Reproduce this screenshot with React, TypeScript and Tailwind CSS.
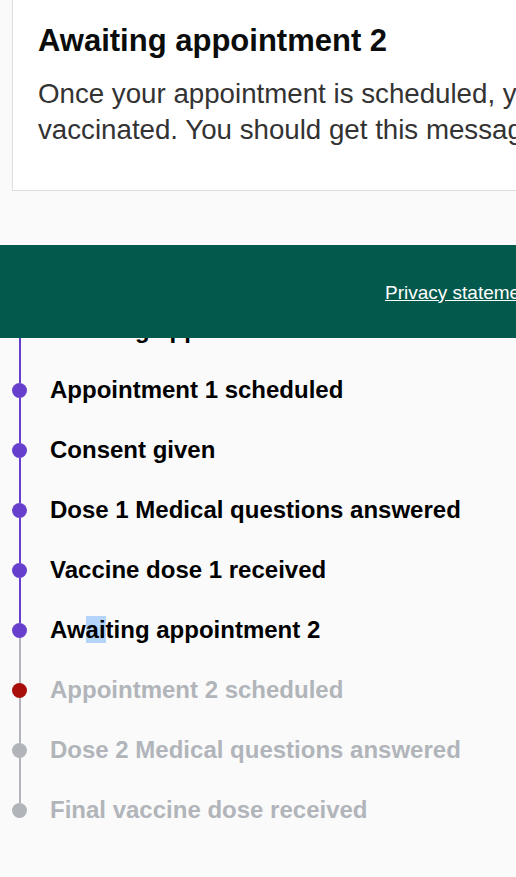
import React from 'react';

type Step = {
  label: string;
  state: 'done' | 'current' | 'blocked' | 'todo';
};

const steps: Step[] = [
  { label: 'Awaiting appointment 1', state: 'done' },
  { label: 'Appointment 1 scheduled', state: 'done' },
  { label: 'Consent given', state: 'done' },
  { label: 'Dose 1 Medical questions answered', state: 'done' },
  { label: 'Vaccine dose 1 received', state: 'done' },
  { label: 'Awaiting appointment 2', state: 'current' },
  { label: 'Appointment 2 scheduled', state: 'blocked' },
  { label: 'Dose 2 Medical questions answered', state: 'todo' },
  { label: 'Final vaccine dose received', state: 'todo' },
];

const PURPLE = 'bg-[#6640cc]';
const GREY = 'bg-[#b1b5ba]';

const dotColour = (s: Step['state']) => {
  if (s === 'blocked') return 'bg-[#a80f0a]';
  if (s === 'todo') return GREY;
  return PURPLE;
};

const StepLabel: React.FC<{ step: Step }> = ({ step }) => {
  const muted = step.state === 'blocked' || step.state === 'todo';
  if (step.state === 'current') {
    // a bit of the label is selected in the screenshot
    return (
      <span className="text-[24px] font-bold text-black whitespace-nowrap">
        Aw<span className="bg-[#b4d4fb]">ai</span>ting appointment 2
      </span>
    );
  }
  return (
    <span className={`text-[24px] font-bold whitespace-nowrap ${muted ? 'text-[#b1b5ba]' : 'text-black'}`}>
      {step.label}
    </span>
  );
};

export default function App() {
  const current = steps.findIndex((s) => s.state === 'current');

  return (
    <div
      className="relative w-[516px] min-h-[877px] overflow-hidden bg-[#fafafa]"
      style={{ fontFamily: '"Liberation Sans", Arial, sans-serif' }}
    >
      <div className="ml-[12px] w-[800px] bg-white border border-t-0 border-[#dedede] pl-[25px] pt-[21px] pb-[42px]">
        <h2 className="text-[31px] leading-[39px] font-bold text-[#0b0c0c] whitespace-nowrap">
          Awaiting appointment 2
        </h2>
        <p className="mt-[16px] text-[27.7px] leading-[36px] text-[#333333] whitespace-nowrap">
          Once your appointment is scheduled, you will receive a message telling you where to get
          <br />
          vaccinated. You should get this message within a few days.
        </p>
      </div>

      <ul className="mt-[109px]">
        {steps.map((step, i) => {
          const topCol = i <= current ? PURPLE : GREY;
          const bottomCol = i < current ? PURPLE : GREY;
          const last = i === steps.length - 1;
          return (
            <li key={step.label} className="flex items-center h-[60px]">
              <div className="ml-[12px] w-[15px] h-full flex flex-col items-center">
                <div className={`flex-1 w-[2px] ${topCol}`} />
                <div className={`w-[15px] h-[15px] rounded-full shrink-0 ${dotColour(step.state)}`} />
                <div className={`flex-1 w-[2px] ${last ? '' : bottomCol}`} />
              </div>
              <div className="ml-[23px]">
                <StepLabel step={step} />
              </div>
            </li>
          );
        })}
      </ul>

      <footer className="absolute left-0 top-[245px] w-full h-[93px] bg-[#03594b] flex items-center pl-[385px] pt-[3px]">
        <a href="#" className="text-[19px] text-white underline whitespace-nowrap">
          Privacy statement
        </a>
      </footer>
    </div>
  );
}
